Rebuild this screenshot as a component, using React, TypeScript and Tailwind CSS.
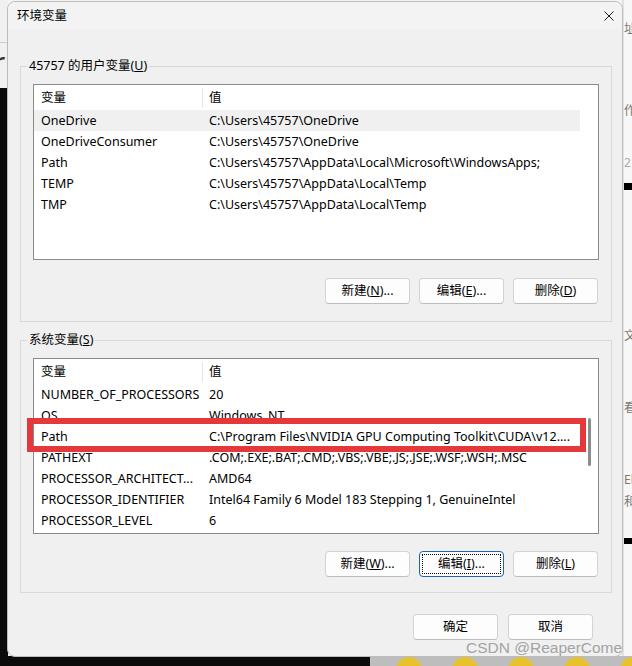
import React from "react";

const FONT = "font-['Noto_Sans','Noto_Sans_CJK_SC',sans-serif]";

type Row = [string, string];

const userRows: Row[] = [
  ["OneDrive", "C:\\Users\\45757\\OneDrive"],
  ["OneDriveConsumer", "C:\\Users\\45757\\OneDrive"],
  ["Path", "C:\\Users\\45757\\AppData\\Local\\Microsoft\\WindowsApps;"],
  ["TEMP", "C:\\Users\\45757\\AppData\\Local\\Temp"],
  ["TMP", "C:\\Users\\45757\\AppData\\Local\\Temp"],
];

const sysRows: Row[] = [
  ["NUMBER_OF_PROCESSORS", "20"],
  ["OS", "Windows_NT"],
  ["Path", "C:\\Program Files\\NVIDIA GPU Computing Toolkit\\CUDA\\v12...."],
  ["PATHEXT", ".COM;.EXE;.BAT;.CMD;.VBS;.VBE;.JS;.JSE;.WSF;.WSH;.MSC"],
  ["PROCESSOR_ARCHITECT...", "AMD64"],
  ["PROCESSOR_IDENTIFIER", "Intel64 Family 6 Model 183 Stepping 1, GenuineIntel"],
  ["PROCESSOR_LEVEL", "6"],
];

function ListBox({ rows, selected, thumb }: { rows: Row[]; selected?: number; thumb?: boolean }) {
  return (
    <div className="h-[176px] border border-[#8a8a8a] bg-white flex overflow-hidden">
      <div className="w-[546px] flex flex-col">
        <div className="h-[25px] pt-[1px] flex items-center">
          <div className="w-[169px] h-full flex items-center justify-between">
            <span className="pl-[7px]">变量</span>
            <span className="w-px h-[20px] bg-[#e5e5e5]" />
          </div>
          <span className="pl-[6px]">值</span>
        </div>
        {rows.map((r, i) => (
          <div
            key={i}
            className={`h-[21px] shrink-0 pt-[2px] flex items-center whitespace-nowrap ${i === selected ? "bg-[#f0f0f0]" : ""}`}
          >
            <span className="w-[169px] pl-[7px] overflow-hidden">{r[0]}</span>
            <span className="pl-[6px]">{r[1]}</span>
          </div>
        ))}
      </div>
      <div className="flex-1 flex flex-col items-center">
        {thumb && <div className="mt-[59px] w-[3px] h-[48px] rounded-full bg-[#8c8c8c]" />}
      </div>
    </div>
  );
}

function Btn({ children, focus }: { children: React.ReactNode; focus?: boolean }) {
  if (focus) {
    return (
      <div className="w-[85px] h-[26px] rounded-[4px] border border-[#1c65b0] bg-[#fdfdfd] p-[2px]">
        <div className="w-full h-full border border-dotted border-black flex items-center justify-center">
          {children}
        </div>
      </div>
    );
  }
  return (
    <div className="w-[85px] h-[26px] rounded-[4px] border border-[#d3d3d3] border-b-[#bdbdbd] bg-[#fdfdfd] flex items-center justify-center">
      {children}
    </div>
  );
}

function U({ c }: { c: string }) {
  return <span className="underline underline-offset-[1px]">{c}</span>;
}

export default function App() {
  return (
    <div className={`relative w-[632px] h-[666px] overflow-hidden bg-[#f4f4f4] ${FONT} text-[12.5px] text-black`}>
      {/* desktop background */}
      <div className="absolute left-0 top-0 w-[8px] h-[666px] bg-[#f0f0f0] overflow-hidden">
        <div className="h-[43px] border-b border-[#cfcfcf]" />
        <div className="h-[45px] text-[30px] leading-[40px] italic text-[#333] -ml-[8px]">r</div>
        <div className="h-[578px] bg-[#0b0b0b]" />
      </div>
      <div className="absolute left-[622px] top-0 w-[10px] h-[666px] bg-[#f7f7f7] border-l-2 border-[#e2e2e2] overflow-hidden text-[#777] text-[12px] leading-none">
        <div className="mt-[23px]">址</div>
        <div className="mt-[70px]">作</div>
        <div className="mt-[40px] text-[#aaa]">2</div>
        <div className="mt-[14px] h-[7px] bg-black" />
        <div className="mt-[140px]">文</div>
        <div className="mt-[60px]">看</div>
        <div className="mt-[60px]">El</div>
        <div className="mt-[10px]">和</div>
        <div className="mt-[30px] h-[6px] bg-black" />
      </div>
      <div className="absolute left-0 top-[656px] w-[632px] h-[10px] flex">
        <div className="w-[370px] h-full bg-[#0b0b0b]" />
        <div className="flex-1 h-full bg-[#bdbdbd] flex gap-[30px] pl-[26px] overflow-hidden">
          <div className="w-[26px] h-[26px] mt-[1px] rounded-full bg-[#e8c22c] shrink-0" />
          <div className="w-[26px] h-[26px] mt-[1px] rounded-full bg-[#e8c22c] shrink-0" />
          <div className="w-[26px] h-[26px] mt-[1px] rounded-full bg-[#e8c22c] shrink-0" />
          <div className="w-[26px] h-[26px] mt-[1px] rounded-full bg-[#e8c22c] shrink-0" />
          <div className="w-[26px] h-[26px] mt-[1px] rounded-full bg-[#e8c22c] shrink-0" />
        </div>
      </div>

      {/* dialog window */}
      <div className="absolute left-[7px] top-[1px] w-[616px] h-[656px] rounded-[8px] border border-[#bcbcbc] bg-[#f0f0f0] flex flex-col">
        <div className="h-[27px] pt-[1px] flex items-center justify-between pl-[9px] pr-[8px] bg-[#f3f3f3] rounded-t-[8px]">
          <span>环境变量</span>
          <svg width="10" height="10" viewBox="0 0 10 10">
            <path d="M0.5 0.5 L9.5 9.5 M9.5 0.5 L0.5 9.5" stroke="#1a1a1a" strokeWidth="1" />
          </svg>
        </div>

        <fieldset className="ml-[12px] mr-[10px] mt-[28px] border border-[#d9d9d9] px-[12px] pt-[9px] pb-[17px]">
          <legend className="-ml-[6px] px-[2px] leading-[18px]">
            45757 的用户变量(<U c="U" />)
          </legend>
          <ListBox rows={userRows} selected={0} />
          <div className="mt-[18px] flex justify-end gap-[9px] pr-[1px]">
            <Btn>新建(<U c="N" />)...</Btn>
            <Btn>编辑(<U c="E" />)...</Btn>
            <Btn>删除(<U c="D" />)</Btn>
          </div>
        </fieldset>

        <fieldset className="ml-[12px] mr-[10px] mt-[9px] border border-[#d9d9d9] px-[12px] pt-[9px] pb-[15px]">
          <legend className="-ml-[6px] px-[2px] leading-[18px]">
            系统变量(<U c="S" />)
          </legend>
          <ListBox rows={sysRows} thumb />
          <div className="mt-[17px] flex justify-end gap-[9px] pr-[1px]">
            <Btn>新建(<U c="W" />)...</Btn>
            <Btn focus>编辑(<U c="I" />)...</Btn>
            <Btn>删除(<U c="L" />)</Btn>
          </div>
        </fieldset>

        <div className="mt-[21px] mr-[29px] flex justify-end gap-[10px]">
          <Btn>确定</Btn>
          <Btn>取消</Btn>
        </div>
      </div>

      {/* red highlight annotation */}
      <div className="absolute left-[27px] top-[418px] w-[559px] h-[34px] border-[6px] border-[#e5383b]" />

      {/* watermark */}
      <div className="absolute left-[466px] top-[638px] text-[15.5px] leading-[20px] text-[#a3a3a3] font-['Liberation_Sans',sans-serif] whitespace-nowrap">
        CSDN @ReaperCome
      </div>
    </div>
  );
}
